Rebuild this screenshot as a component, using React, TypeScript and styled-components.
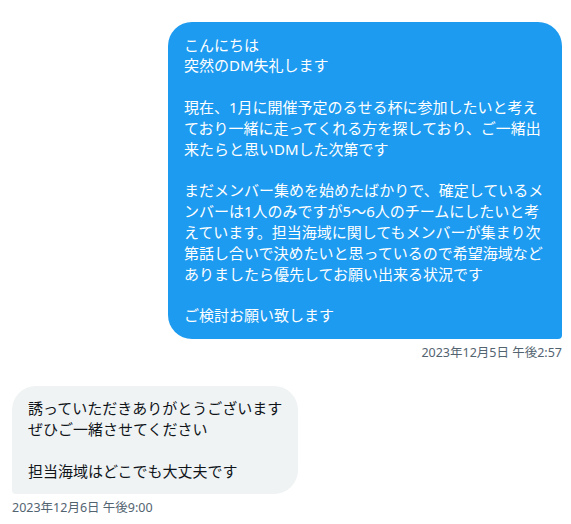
import React from "react";
import styled, { createGlobalStyle, css } from "styled-components";

const GlobalStyle = createGlobalStyle`
  html, body {
    margin: 0;
    padding: 0;
    background: #ffffff;
  }
  body {
    font-family: "Noto Sans", "Noto Sans CJK JP", sans-serif;
    -webkit-font-smoothing: antialiased;
  }
`;

const Page = styled.div`
  width: 571px;
  box-sizing: border-box;
  padding: 22px 9px 0 12px;
  display: flex;
  flex-direction: column;
  gap: 25px;
`;

const Group = styled.div<{ $side: "sent" | "received" }>`
  display: flex;
  flex-direction: column;
  align-items: ${(p) => (p.$side === "sent" ? "flex-end" : "flex-start")};
`;

const Bubble = styled.div<{ $side: "sent" | "received" }>`
  box-sizing: border-box;
  max-width: 394px;
  padding: 12.5px 16px 12.5px 16px;
  font-family: "Noto Sans", "Noto Sans CJK JP", sans-serif;
  font-size: 15px;
  line-height: 20.85px;
  white-space: pre-wrap;
  word-break: normal;
  line-break: normal;
  border-radius: 24px;
  ${(p) =>
    p.$side === "sent"
      ? css`
          background: #1d9bf0;
          color: #ffffff;
          border-bottom-right-radius: 4px;
        `
      : css`
          background: #eff3f4;
          color: #0f1419;
          border-bottom-left-radius: 4px;
        `}
`;

const Timestamp = styled.div`
  margin-top: 6px;
  font-family: "Noto Sans", "Noto Sans CJK JP", sans-serif;
  font-size: 12.5px;
  line-height: 16px;
  color: #536471;
  white-space: nowrap;
`;

const messages: { side: "sent" | "received"; text: string; time: string }[] = [
  {
    side: "sent",
    text:
      "こんにちは\n突然のDM失礼します\n\n現在、1月に開催予定のるせる杯に参加したいと考えており一緒に走ってくれる方を探しており、ご一緒出来たらと思いDMした次第です\n\nまだメンバー集めを始めたばかりで、確定しているメンバーは1人のみですが5〜6人のチームにしたいと考えています。担当海域に関してもメンバーが集まり次第話し合いで決めたいと思っているので希望海域などありましたら優先してお願い出来る状況です\n\nご検討お願い致します",
    time: "2023年12月5日 午後2:57",
  },
  {
    side: "received",
    text:
      "誘っていただきありがとうございます\nぜひご一緒させてください\n\n担当海域はどこでも大丈夫です",
    time: "2023年12月6日 午後9:00",
  },
];

export default function App() {
  return (
    <>
      <GlobalStyle />
      <Page>
        {messages.map((m, i) => (
          <Group key={i} $side={m.side}>
            <Bubble $side={m.side}>{m.text}</Bubble>
            <Timestamp>{m.time}</Timestamp>
          </Group>
        ))}
      </Page>
    </>
  );
}
